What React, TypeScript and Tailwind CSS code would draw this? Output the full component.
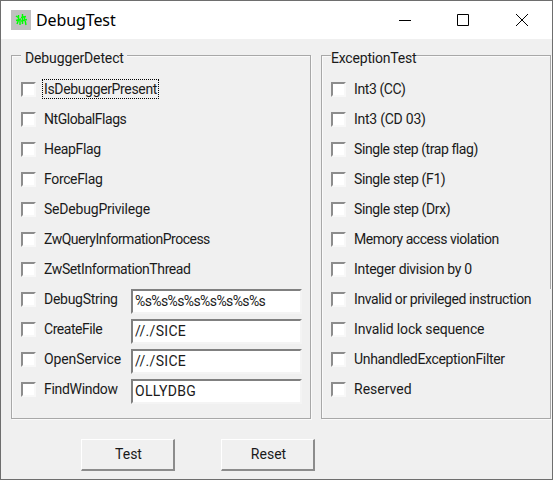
import React, { useState } from 'react';

interface CheckItem {
  label: string;
  tracking: string;
  value?: string;
  valueTracking?: string;
  overlapsFrame?: boolean;
}

const debuggerItems: CheckItem[] = [
  { label: 'IsDebuggerPresent', tracking: 'tracking-[-0.35px]' },
  { label: 'NtGlobalFlags', tracking: 'tracking-[-0.45px]' },
  { label: 'HeapFlag', tracking: 'tracking-[-0.35px]' },
  { label: 'ForceFlag', tracking: 'tracking-[-0.35px]' },
  { label: 'SeDebugPrivilege', tracking: 'tracking-[-0.2px]' },
  { label: 'ZwQueryInformationProcess', tracking: 'tracking-[-0.5px]' },
  { label: 'ZwSetInformationThread', tracking: 'tracking-[-0.4px]' },
  { label: 'DebugString', tracking: 'tracking-[-0.27px]', value: '%s%s%s%s%s%s%s%s', valueTracking: 'tracking-[-0.6px]' },
  { label: 'CreateFile', tracking: 'tracking-[-0.45px]', value: '//./SICE', valueTracking: 'tracking-[0.3px]' },
  { label: 'OpenService', tracking: 'tracking-[-0.1px]', value: '//./SICE', valueTracking: 'tracking-[0.3px]' },
  { label: 'FindWindow', tracking: 'tracking-[-0.3px]', value: 'OLLYDBG', valueTracking: 'tracking-[0.3px]' },
];

const exceptionItems: CheckItem[] = [
  { label: 'Int3 (CC)', tracking: 'tracking-[-0.4px]' },
  { label: 'Int3 (CD 03)', tracking: 'tracking-[-0.25px]' },
  { label: 'Single step (trap flag)', tracking: 'tracking-[-0.42px]' },
  { label: 'Single step (F1)', tracking: 'tracking-[-0.38px]' },
  { label: 'Single step (Drx)', tracking: 'tracking-[-0.38px]' },
  { label: 'Memory access violation', tracking: 'tracking-[-0.46px]' },
  { label: 'Integer division by 0', tracking: 'tracking-[-0.3px]' },
  { label: 'Invalid or privileged instruction', tracking: 'tracking-[-0.4px]', overlapsFrame: true },
  { label: 'Invalid lock sequence', tracking: 'tracking-[-0.15px]' },
  { label: 'UnhandledExceptionFilter', tracking: 'tracking-[-0.34px]' },
  { label: 'Reserved', tracking: '' },
];

function CheckRow({ item, focused }: { item: CheckItem; focused?: boolean }) {
  const [checked, setChecked] = useState(false);
  const [text, setText] = useState(item.value ?? '');

  return (
    <div className="flex h-[30px] items-start pt-1">
      <label className="flex items-start">
        <input
          type="checkbox"
          checked={checked}
          onChange={(e) => setChecked(e.target.checked)}
          className="mt-[3px] size-[15px] shrink-0 appearance-none border-2 border-t-[#8c8c8c] border-r-[#f8f8f8] border-b-[#f8f8f8] border-l-[#8c8c8c] bg-white checked:bg-black"
        />
        <span
          className={`ml-[6px] h-[20px] whitespace-nowrap border border-dotted px-px leading-[19px] ${item.tracking} ${
            focused ? 'border-black' : 'border-transparent'
          }`}
        >
          {item.label}
        </span>
      </label>
      {item.value !== undefined && (
        <input
          value={text}
          onChange={(e) => setText(e.target.value)}
          className={`mr-[8px] ml-auto h-[25px] w-[171px] border-2 border-t-[#808080] border-r-[#f4f4f4] border-b-[#f4f4f4] border-l-[#808080] bg-white pb-px pl-[2px] outline-none ${item.valueTracking ?? ''}`}
        />
      )}
      {item.overlapsFrame && <span className="z-10 -mr-[2px] ml-auto h-[21px] w-[4px] bg-[#f0f0f0]" />}
    </div>
  );
}

interface GroupProps {
  title: string;
  className: string;
  legendClassName: string;
  children: React.ReactNode;
}

function Group({ title, className, legendClassName, children }: GroupProps) {
  return (
    <fieldset
      className={`h-[373px] shrink-0 border border-[#a8a8a8] pt-[10px] pl-[9px] shadow-[1px_1px_0_#fafafa,inset_1px_1px_0_#fafafa] ${className}`}
    >
      <legend className={`h-[19px] bg-[#f0f0f0] pt-1 leading-[17px] whitespace-nowrap ${legendClassName}`}>{title}</legend>
      {children}
    </fieldset>
  );
}

function PushButton({ label, onClick }: { label: string; onClick?: () => void }) {
  return (
    <button
      onClick={onClick}
      className="h-8 w-[94px] border-t border-r-2 border-b-2 border-l border-t-white border-r-[#8c8c8c] border-b-[#8c8c8c] border-l-white pb-px pl-[2px]"
    >
      {label}
    </button>
  );
}

function App() {
  const [session, setSession] = useState(0);

  return (
    <div className="flex h-[480px] w-[553px] flex-col overflow-hidden border border-[#6e6e6e] bg-[#f0f0f0] font-['Roboto','Liberation_Sans',sans-serif] text-[14px] text-[#1a1a1a]">
      <header className="flex h-[38px] shrink-0 items-center bg-white pl-[10px] text-black">
        <svg className="size-5" viewBox="0 0 20 20">
          <path fill="#c0c0c0" d="M0 0h20v20H0z" />
          <path
            fill="none"
            stroke="#0f0"
            strokeWidth="1.4"
            d="M5 6l3 2M7.500 5v5M5 10.500l5-1.500M8 9l-2 5M9 10v5M11.500 4v10M10 7.500l5-1M13.500 6v4M10 11l6-1.500M14 10l1 5"
          />
        </svg>
        <h1 className="ml-[5px] font-['Noto_Sans',sans-serif] text-[16px] tracking-[-0.1px]">DebugTest</h1>
        <svg className="mr-px ml-auto h-5 w-[154px]" viewBox="0 0 154 20" fill="none" stroke="#000">
          <path d="M2 10.500h12M60.500 4.500h11v11h-11zM119 4l12 12M131 4l-12 12" />
        </svg>
      </header>

      <main key={session} className="flex gap-[10px] px-[10px] pt-[7px]">
        <Group title="DebuggerDetect" className="w-[300px]" legendClassName="pr-[3px] pl-[4px] tracking-[-0.13px]">
          {debuggerItems.map((item, i) => (
            <CheckRow key={item.label} item={item} focused={i === 0} />
          ))}
        </Group>
        <Group title="ExceptionTest" className="w-[230px]" legendClassName="tracking-[-0.2px]">
          {exceptionItems.map((item) => (
            <CheckRow key={item.label} item={item} />
          ))}
        </Group>
      </main>

      <footer className="flex gap-[46px] pt-5 pl-20">
        <PushButton label="Test" />
        <PushButton label="Reset" onClick={() => setSession(session + 1)} />
      </footer>
    </div>
  );
}

export default App;
